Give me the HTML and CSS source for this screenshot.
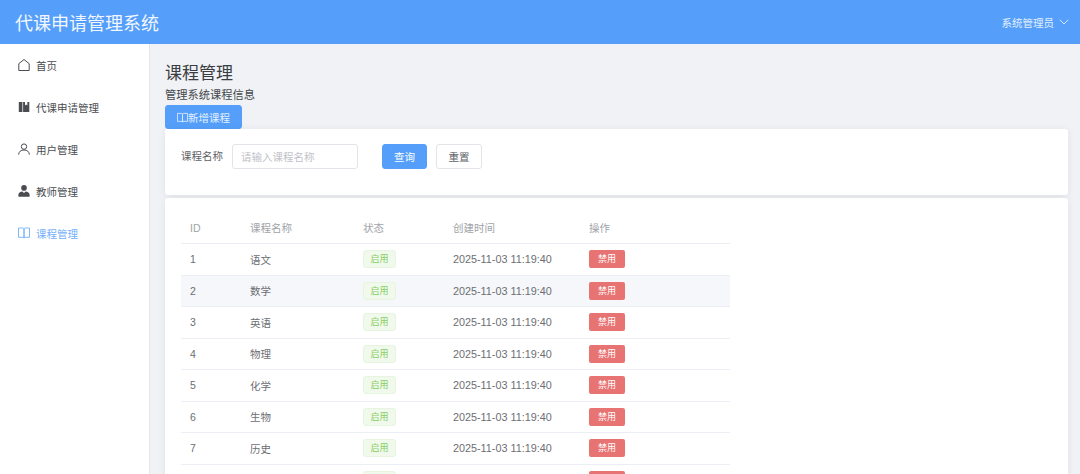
FILE: index.html
```html
<!DOCTYPE html>
<html lang="zh-CN">
<head>
<meta charset="utf-8">
<title>代课申请管理系统</title>
<link rel="stylesheet" href="styles.css">
</head>
<body>
<header class="topbar">
  <div class="brand">代课申请管理系统</div>
  <div class="user">系统管理员
    <svg class="chev" viewBox="0 0 10 6" width="10" height="6"><path d="M.8.8 5 5 9.2.8" fill="none" stroke="currentColor" stroke-width=".9"/></svg>
  </div>
</header>
<div class="shell">
  <aside class="sidebar">
    <a class="nav-item">
      <svg class="ico" viewBox="0 0 12 12"><path d="M.8 11.500V4.700L6 .5l5.200 4.200v6.800z" fill="none" stroke="currentColor" stroke-width="1"/></svg>
      <span>首页</span></a>
    <a class="nav-item">
      <svg class="ico" viewBox="0 0 12 12"><path d="M.8 1h3.600v10H.8zM5.100 1h6.200v10H5.100z" fill="currentColor"/><path d="M7 1h2.400v3.600L8.200 3.500 7 4.600z" fill="#fff"/></svg>
      <span>代课申请管理</span></a>
    <a class="nav-item">
      <svg class="ico" viewBox="0 0 12 12"><circle cx="6" cy="3.600" r="2.700" fill="none" stroke="currentColor"/><path d="M.7 11.600c0-3 2.200-4.600 5.300-4.600s5.300 1.600 5.300 4.600" fill="none" stroke="currentColor"/></svg>
      <span>用户管理</span></a>
    <a class="nav-item">
      <svg class="ico" viewBox="0 0 12 12"><circle cx="6" cy="2.900" r="2.800" fill="currentColor"/><path d="M.4 11.800V9.500c0-1.700 1.800-2.900 4-3.100L6 8l1.600-1.600c2.200.2 4 1.400 4 3.100v2.300z" fill="currentColor"/></svg>
      <span>教师管理</span></a>
    <a class="nav-item active">
      <svg class="ico" viewBox="0 0 12 12"><path d="M.5 1h4.200c.7 0 1.300.4 1.300 1.100v9c0-.5-.6-.8-1.300-.8H.5zM11.500 1H7.300c-.7 0-1.300.4-1.300 1.100v9c0-.5.6-.8 1.300-.8h4.200z" fill="none" stroke="currentColor" stroke-width=".9"/></svg>
      <span>课程管理</span></a>
  </aside>
  <main class="content">
    <h1 class="page-title">课程管理</h1>
    <p class="page-sub">管理系统课程信息</p>
    <button class="btn btn-primary btn-add">
      <svg class="btn-ico" viewBox="0 0 12 12"><path d="M.5 1.500h4.200c.7 0 1.300.4 1.300 1.100v8.400c0-.5-.6-.8-1.300-.8H.5zM11.500 1.500H7.300c-.7 0-1.300.4-1.300 1.100v8.400c0-.5.6-.8 1.300-.8h4.200z" fill="none" stroke="currentColor" stroke-width=".9"/></svg>新增课程</button>
    <section class="card card-search">
      <label class="field-label">课程名称</label>
      <input class="field-input" placeholder="请输入课程名称">
      <button class="btn btn-primary btn-query">查询</button>
      <button class="btn btn-plain">重置</button>
    </section>
    <section class="card card-table">
      <table class="grid">
        <colgroup><col class="c1"><col class="c2"><col class="c3"><col class="c4"><col class="c5"></colgroup>
        <thead><tr><th>ID</th><th>课程名称</th><th>状态</th><th>创建时间</th><th>操作</th></tr></thead>
        <tbody>
          <tr><td>1</td><td>语文</td><td><span class="tag">启用</span></td><td class="date">2025-11-03 11:19:40</td><td><span class="danger">禁用</span></td></tr>
          <tr class="alt"><td>2</td><td>数学</td><td><span class="tag">启用</span></td><td class="date">2025-11-03 11:19:40</td><td><span class="danger">禁用</span></td></tr>
          <tr><td>3</td><td>英语</td><td><span class="tag">启用</span></td><td class="date">2025-11-03 11:19:40</td><td><span class="danger">禁用</span></td></tr>
          <tr><td>4</td><td>物理</td><td><span class="tag">启用</span></td><td class="date">2025-11-03 11:19:40</td><td><span class="danger">禁用</span></td></tr>
          <tr><td>5</td><td>化学</td><td><span class="tag">启用</span></td><td class="date">2025-11-03 11:19:40</td><td><span class="danger">禁用</span></td></tr>
          <tr><td>6</td><td>生物</td><td><span class="tag">启用</span></td><td class="date">2025-11-03 11:19:40</td><td><span class="danger">禁用</span></td></tr>
          <tr><td>7</td><td>历史</td><td><span class="tag">启用</span></td><td class="date">2025-11-03 11:19:40</td><td><span class="danger">禁用</span></td></tr>
          <tr class="last"><td></td><td></td><td><span class="tag"></span></td><td></td><td><span class="danger"></span></td></tr>
        </tbody>
      </table>
    </section>
  </main>
</div>
</body>
</html>
```
FILE: styles.css
```css
* { box-sizing: border-box; }
html, body { margin: 0; height: 100%; overflow: hidden; }
body {
  font-family: "Liberation Sans", "Noto Sans CJK SC", sans-serif;
  color: #606266;
  background: #f0f2f5;
}
.topbar {
  height: 44px;
  background: #559ffa;
  color: #fff;
  display: flex;
  align-items: center;
  justify-content: space-between;
  padding: 0 10px 0 15px;
}
.brand { font-size: 18px; color: #f2f7ff; }
.user { font-size: 10.5px; display: flex; align-items: center; gap: 5px; color: #e3efff; }
.chev { display: block; margin-right: 1px; }
.shell { display: flex; height: 430px; }
.sidebar {
  width: 150px;
  flex: none;
  background: #fff;
  border-right: 1px solid #e6e6e6;
}
.nav-item {
  height: 42px;
  display: flex;
  align-items: center;
  gap: 6px;
  padding-left: 18px;
  font-size: 10.5px;
  color: #4a4c50;
}
.nav-item.active { color: #74b0fb; }
.ico { width: 12px; height: 12px; flex: none; }
.content { flex: 1; padding: 19px 12px 0 15px; min-width: 0; }
.page-title { margin: 0; font-size: 17px; font-weight: 400; line-height: 21px; color: #3a3d42; }
.page-sub { margin: 0; font-size: 11.25px; line-height: 19px; padding-top: 2px; color: #44474c; }
.btn {
  font-family: inherit;
  font-size: 10.5px;
  border-radius: 3px;
  border: 1px solid #dcdfe6;
  background: #fff;
  color: #606266;
  padding: 0;
  display: inline-flex;
  align-items: center;
  justify-content: center;
}
.btn-primary { background: #559ffa; border-color: #559ffa; color: #fff; }
.btn-add { width: 77px; height: 24px; display: flex; color: #e3efff; }
.btn-ico { width: 11px; height: 11px; flex: none; }
.card { background: #fff; border-radius: 3px; box-shadow: 0 1px 8px rgba(0,0,0,.07); }
.card-search {
  height: 66px;
  padding: 15px 16px 0;
  display: flex;
  align-items: flex-start;
}
.field-label { font-size: 10.5px; line-height: 24px; margin-right: 9px; color: #606266; }
.field-input {
  width: 126px;
  height: 25px;
  border: 1px solid #e2e4ea;
  border-radius: 3px;
  padding: 0 8px;
  font: 10.5px "Liberation Sans", "Noto Sans CJK SC", sans-serif;
  color: #606266;
  outline: none;
}
.field-input::placeholder { color: #bfc2c8; }
.btn-query { width: 45px; height: 25px; margin-left: 24px; }
.btn-plain { width: 46px; height: 25px; margin-left: 9px; border-color: #e2e4ea; }
.card-table { margin-top: 3px; padding: 14px 16px 0; height: 400px; }
.grid { border-collapse: collapse; table-layout: fixed; width: 549px; font-size: 10.5px; }
.c1 { width: 60px; }
.c2 { width: 113px; }
.c3 { width: 90px; }
.c4 { width: 136px; }
.c5 { width: 150px; }
.grid th, .grid td {
  height: 31.5px;
  padding: 0 0 0 9px;
  text-align: left;
  font-weight: 400;
  border-bottom: 1px solid #ebeef5;
}
.grid th { color: #a0a3a8; }
.grid td { color: #6c6e73; }
.grid td.date { font-size: 10.8px; }
.alt td { background: #f5f7fa; }
.tag {
  display: inline-block;
  width: 33px;
  height: 18px;
  line-height: 16px;
  text-align: center;
  font-size: 9px;
  color: #86cf62;
  background: #f0f9eb;
  border: 1px solid #e6f5de;
  border-radius: 3px;
  vertical-align: middle;
}
.danger {
  display: inline-block;
  width: 36px;
  height: 18px;
  line-height: 18px;
  text-align: center;
  font-size: 9px;
  color: #fff;
  background: #e87373;
  border-radius: 2px;
  vertical-align: middle;
}
```
